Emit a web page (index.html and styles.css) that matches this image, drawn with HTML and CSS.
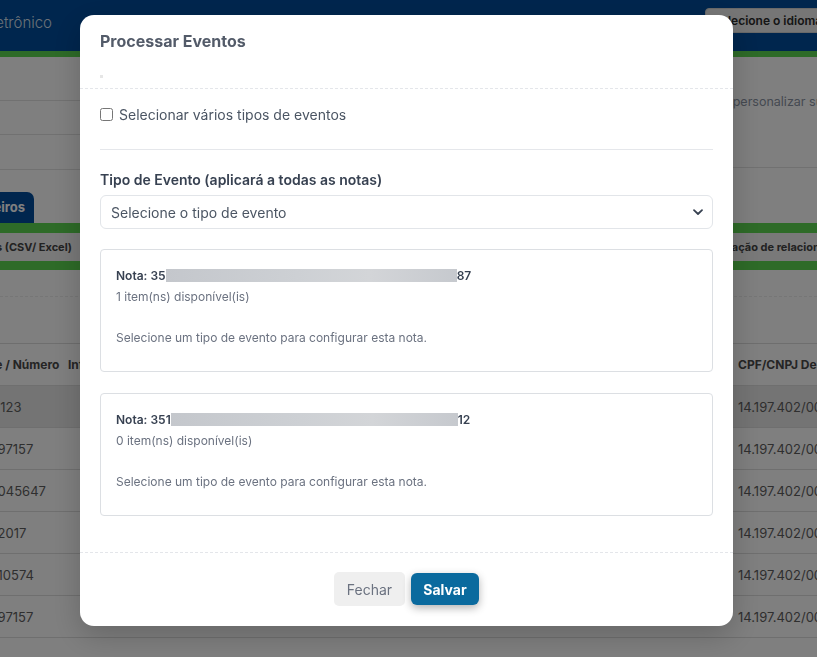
FILE: index.html
```html
<!DOCTYPE html>
<html lang="pt-BR">

<head>
    <meta charset='utf-8'>
    <title>Processar Eventos</title>
    <meta name='viewport' content='width=device-width, initial-scale=1'>

    <link rel="stylesheet" href="styles.css">
</head>

<body>
    <div class="page">
        <header class="topbar">
            <div class="brand"><span>Manifesto Eletrônico</span></div>
            <button class="lang-btn" type="button">Selecione o idioma</button>
        </header>
        <div class="stripe"></div>

        <section class="intro">
            <ul class="side-menu">
                <li></li>
                <li></li>
                <li></li>
            </ul>
            <div class="intro-hint">
                <p><span class="hint-text">Utilize os filtros para personalizar sua consulta</span></p>
            </div>
        </section>

        <nav class="tabs">
            <div class="tab-slot"><span class="tab">Financeiros</span></div>
        </nav>

        <div class="band">
            <div class="band-left"><span>Importar notas (CSV/ Excel)</span></div>
            <div class="band-right"><span class="band-right-text">Visualização de relacionamento</span></div>
        </div>

        <div class="filters">
            <div class="filters-line"></div>
        </div>

        <div class="grid-row thead">
            <div>Série / Número</div>
            <div>Informações</div>
            <div class="col-right">CPF/CNPJ Destinatário</div>
        </div>
        <div class="grid-row row-active">
            <div class="cell-num"><span class="num-short">1 / 123</span></div>
            <div></div>
            <div class="col-right">14.197.402/0001-08</div>
        </div>
        <div class="grid-row">
            <div class="cell-num">11 / 97157</div>
            <div></div>
            <div class="col-right">14.197.402/0001-08</div>
        </div>
        <div class="grid-row">
            <div class="cell-num">11 / 045647</div>
            <div></div>
            <div class="col-right">14.197.402/0001-08</div>
        </div>
        <div class="grid-row">
            <div class="cell-num">11 / 2017</div>
            <div></div>
            <div class="col-right">14.197.402/0001-08</div>
        </div>
        <div class="grid-row">
            <div class="cell-num">11 / 10574</div>
            <div></div>
            <div class="col-right">14.197.402/0001-08</div>
        </div>
        <div class="grid-row">
            <div class="cell-num">11 / 97157</div>
            <div></div>
            <div class="col-right">14.197.402/0001-08</div>
        </div>
    </div>

    <div class="overlay">
        <div class="modal" role="dialog" aria-labelledby="modalTitle">
            <div class="modal-header">
                <h2 id="modalTitle" class="modal-title">Processar Eventos</h2>
                <div class="header-mark"></div>
            </div>

            <div class="modal-body">
                <label class="check-row">
                    <input type="checkbox">
                    <span>Selecionar vários tipos de eventos</span>
                </label>

                <hr class="divider">

                <label class="field-label" for="eventType">Tipo de Evento (aplicará a todas as notas)</label>
                <div class="select" id="eventType">
                    <span>Selecione o tipo de evento</span>
                    <svg width="12" height="12" viewBox="0 0 12 12" aria-hidden="true">
                        <path d="M2 4.2l4 3.8 4-3.8" fill="none" stroke="#374151" stroke-width="1.8" stroke-linecap="round" stroke-linejoin="round"/>
                    </svg>
                </div>

                <div class="nota-card">
                    <div class="nota-title">Nota: 35<span class="masked" style="width: 291px"></span>87</div>
                    <div class="nota-count">1 item(ns) disponível(is)</div>
                    <div class="nota-hint">Selecione um tipo de evento para configurar esta nota.</div>
                </div>

                <div class="nota-card">
                    <div class="nota-title">Nota: 351<span class="masked" style="width: 287px"></span>12</div>
                    <div class="nota-count">0 item(ns) disponível(is)</div>
                    <div class="nota-hint">Selecione um tipo de evento para configurar esta nota.</div>
                </div>
            </div>

            <div class="modal-footer">
                <button class="btn btn-light" type="button">Fechar</button>
                <button class="btn btn-primary" type="button">Salvar</button>
            </div>
        </div>
    </div>
</body>

</html>
```

FILE: styles.css
```css
body {
    margin: 0;
    height: 100vh;
    overflow: hidden;
    background: #fff;
    font-family: Inter, "Noto Sans", sans-serif;
}

/* page behind the dialog */
.page {
    width: 817px;
    overflow: hidden;
}

.topbar {
    height: 51px;
    background: #004c9c;
    display: flex;
    justify-content: space-between;
    align-items: flex-start;
}

.brand {
    width: 52px;
    height: 44px;
    display: flex;
    justify-content: flex-end;
    align-items: center;
    white-space: nowrap;
    color: rgba(255, 255, 255, 0.85);
    font-size: 15px;
    font-weight: 300;
}

.lang-btn {
    margin-top: 8px;
    margin-right: -16px;
    width: 128px;
    height: 25px;
    padding: 0 0 0 7px;
    text-align: left;
    white-space: nowrap;
    background: #ececec;
    border: 1px solid #d2d2d2;
    border-radius: 4px;
    color: #2b2b2b;
    font: 600 12px Inter, sans-serif;
}

.stripe {
    height: 6px;
    background: #5cd650;
}

.intro {
    height: 135px;
    display: flex;
    justify-content: space-between;
}

.side-menu {
    list-style: none;
    margin: 0;
    padding: 0;
    width: 80px;
}

.side-menu li {
    border-bottom: 1px solid #e2e2e2;
    height: 33px;
}

.side-menu li:first-child {
    height: 43px;
}

.side-menu li:last-child {
    height: 34px;
}

.intro-hint {
    width: 84px;
    height: 110px;
    border-bottom: 1px solid #e2e2e2;
    overflow: hidden;
}

.intro-hint p {
    margin: 35px 0 0;
    line-height: 20px;
    font-size: 12.5px;
    color: #8a93a3;
    white-space: nowrap;
}

.hint-text {
    display: inline-block;
    margin-left: -125px;
}

.tabs {
    height: 31px;
    display: flex;
}

.tab-slot {
    width: 34px;
    display: flex;
    justify-content: flex-end;
}

.tab {
    background: #004c9c;
    color: #fff;
    font-size: 13px;
    font-weight: 700;
    line-height: 31px;
    padding: 0 9px;
    border-radius: 0 7px 0 0;
    white-space: nowrap;
}

.band {
    height: 28px;
    border-top: 10px solid #5cd650;
    border-bottom: 9px solid #5cd650;
    background: #f2f2f2;
    display: flex;
    justify-content: space-between;
    align-items: center;
    font-size: 11px;
    font-weight: 700;
    color: #444;
    white-space: nowrap;
}

.band-left {
    width: 72px;
    display: flex;
    justify-content: flex-end;
}

.band-right {
    width: 84px;
    overflow: hidden;
}

.band-right-text {
    display: inline-block;
    margin-left: -44px;
}

.filters {
    height: 73px;
    padding-top: 26px;
    box-sizing: border-box;
}

.filters-line {
    border-top: 1px dashed #ececec;
}

.grid-row {
    display: grid;
    grid-template-columns: 96px 1fr 84px;
    margin-left: -28px;
    height: 41px;
    align-items: center;
    border-bottom: 1px solid #dedede;
    font-size: 13px;
    color: #5e5e5e;
    white-space: nowrap;
}

.grid-row > div {
    overflow: hidden;
}

.thead {
    height: 41px;
    border-top: 1px solid #dcdcdc;
    font-size: 12px;
    font-weight: 700;
    color: #4a4a4a;
}

.cell-num {
    padding-left: 3px;
}

.col-right {
    padding-left: 5px;
}

.row-active {
    background: #e9e9e9;
}

.num-short {
    padding-left: 8px;
}

/* dialog */
.overlay {
    position: fixed;
    inset: 0;
    background: rgba(0, 0, 0, 0.5);
    display: flex;
    justify-content: center;
    align-items: flex-start;
    padding: 15px 4px 0 0;
}

.modal {
    width: 653px;
    background: #fff;
    border-radius: 14px;
    box-shadow: 0 10px 30px rgba(0, 0, 0, 0.2);
}

.modal-header {
    padding: 14px 20px 10px;
    border-bottom: 1px dashed #e4e6ea;
}

.modal-title {
    margin: 0;
    font-size: 16px;
    font-weight: 700;
    line-height: 24px;
    color: #535b69;
}

.header-mark {
    width: 3px;
    height: 3px;
    margin-top: 22px;
    background: #e6e6e6;
}

.modal-body {
    padding: 15px 20px 36px;
}

.check-row {
    display: flex;
    align-items: center;
    gap: 6px;
    height: 20px;
    font-size: 14px;
    color: #4b5563;
}

.check-row input {
    width: 13px;
    height: 13px;
    margin: 0;
}

.divider {
    border: 0;
    border-top: 1px solid #e5e7eb;
    margin: 25px 0 0;
}

.field-label {
    display: block;
    margin-top: 20px;
    line-height: 20px;
    font-size: 14px;
    font-weight: 600;
    color: #374151;
}

.select {
    margin-top: 5px;
    height: 34px;
    box-sizing: border-box;
    border: 1px solid #e2e5e9;
    border-radius: 6px;
    display: flex;
    align-items: center;
    justify-content: space-between;
    padding: 0 8px 0 10px;
    font-size: 14px;
    color: #4b5563;
}

.nota-card {
    margin-top: 20px;
    border: 1px solid #dcdfe3;
    border-radius: 4px;
    padding: 17px 15px 24px;
    font-size: 12px;
}

.nota-card + .nota-card {
    margin-top: 21px;
}

.nota-title {
    line-height: 18px;
    font-weight: 600;
    color: #374151;
    white-space: nowrap;
}

.masked {
    display: inline-block;
    height: 13px;
    vertical-align: -2px;
    background: linear-gradient(90deg, #c4c7cc, #cdd0d4 45%, #d3d5d8 70%, #c6c9ce);
}

.nota-count {
    margin-top: 3px;
    line-height: 18px;
    color: #6b7280;
}

.nota-hint {
    margin-top: 23px;
    line-height: 18px;
    color: #6b7280;
}

.modal-footer {
    border-top: 1px dashed #e4e6ea;
    padding: 19px 20px 20px;
    display: flex;
    justify-content: center;
    align-items: flex-start;
    gap: 6px;
}

.btn {
    height: 34px;
    border: 0;
    border-radius: 5px;
    font: 14px Inter, sans-serif;
    padding: 0;
    cursor: pointer;
}

.btn-light {
    width: 71px;
    background: #efefef;
    color: #6b7280;
}

.btn-primary {
    width: 68px;
    height: 32px;
    margin-top: 1px;
    border-radius: 6px;
    background: #0a6a9e;
    color: #fff;
    font-weight: 700;
    box-shadow: 0 3px 8px rgba(0, 0, 0, 0.3);
}
```
